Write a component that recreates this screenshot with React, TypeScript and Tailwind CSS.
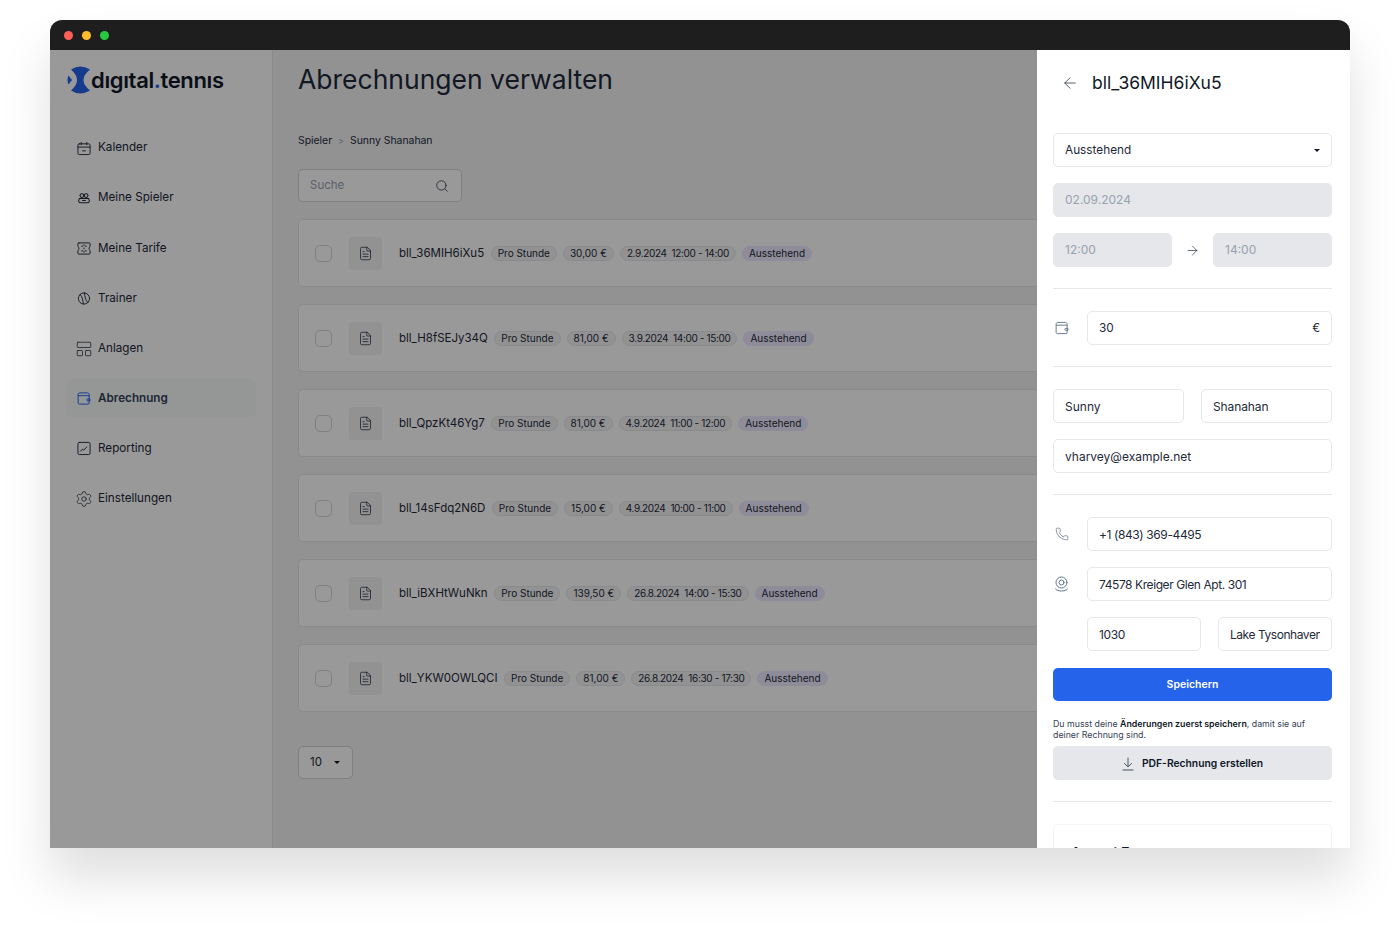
import { ArrowLeft, ArrowRight, FileText, LayoutPanelTop, Phone, Search, Settings } from "lucide-react";
import type { ReactNode } from "react";

const font = { fontFamily: "Inter, 'Noto Sans', sans-serif" };

const Calendar = () => (
  <svg width="15" height="15" viewBox="0 0 15 15" fill="none" stroke="currentColor" strokeWidth="1" strokeLinecap="round">
    <rect x="1" y="2.5" width="13" height="11.5" rx="1.5" />
    <path d="M1 6h13M4.5 1v2.5M10.5 1v2.5M6 10h3" />
  </svg>
);

const Users = () => (
  <svg width="15" height="15" viewBox="0 0 15 15" fill="none" stroke="currentColor" strokeWidth="1.1" strokeLinecap="round">
    <circle cx="5.2" cy="4.4" r="2" />
    <circle cx="9.8" cy="4.4" r="2" />
    <path d="M2.6 7.4h9.8l.8 2.4c.2 1.1-.5 2.2-1.7 2.2H3.5c-1.2 0-1.9-1.1-1.7-2.2zM6 9.6h3" />
  </svg>
);

const Ticket = () => (
  <svg width="15" height="15" viewBox="0 0 15 15" fill="none" stroke="currentColor" strokeWidth="1" strokeLinecap="round">
    <path d="M2 1.5h11c.6 0 1 .4 1 1V5.500c-1.500.5-1.500 3.500 0 4v3c0 .6-.4 1-1 1H2c-.6 0-1-.4-1-1v-3c1.500-.5 1.500-3.500 0-4v-3c0-.6.4-1 1-1z" />
    <path d="M7.500 3.500v1M7.500 7v1M7.500 10.500v1M5 5h1M9 5h1M5 10h1M9 10h1" />
  </svg>
);

const Ball = () => (
  <svg width="15" height="15" viewBox="0 0 15 15" fill="none" stroke="currentColor" strokeWidth="1" strokeLinecap="round">
    <circle cx="7.500" cy="7.500" r="6" />
    <path d="M3.300 3.200c2.700 2.300 2.900 6.200 3.500 10.200M8 1.600c.6 4 .8 7.900 3.700 10.100" />
  </svg>
);

const Wallet = ({ size = 15 }: { size?: number }) => (
  <svg width={size} height={size} viewBox="0 0 15 15" fill="none" stroke="currentColor" strokeWidth="1" strokeLinecap="round">
    <path d="M13 4.500V3.200c0-1-.6-1.700-1.600-1.700H3C1.900 1.500 1.200 2.300 1.200 3.400v8.800c0 .8.600 1.300 1.300 1.300h9.300c.7 0 1.200-.5 1.200-1.200V4.500H1.500" />
    <path d="M13.500 8h-2.200c-.5 0-.9.400-.9 1s.4 1 .9 1h2.200z" />
  </svg>
);

const Chart = () => (
  <svg width="15" height="15" viewBox="0 0 15 15" fill="none" stroke="currentColor" strokeWidth="1" strokeLinecap="round" strokeLinejoin="round">
    <rect x="1" y="1" width="13" height="13" rx="1.5" />
    <path d="M3.500 10.500l2.300-2.300 1.400 1.100 3.300-3.400" />
  </svg>
);

const Pin = () => (
  <svg width="15" height="16" viewBox="0 0 15 16" fill="none" stroke="currentColor" strokeWidth="1" strokeLinecap="round">
    <circle cx="7.500" cy="6.500" r="5.500" />
    <circle cx="7.500" cy="6.500" r="2.500" />
    <path d="M1.500 13c1 1.300 3.400 2 6 2s5-.7 6-2" />
  </svg>
);

const Download = () => (
  <svg width="12" height="14" viewBox="0 0 12 14" fill="none" stroke="currentColor" strokeWidth="1" strokeLinecap="round" strokeLinejoin="round">
    <path d="M6 1v8.500M2.500 6.500L6 9.800l3.500-3.300M1 13h10" />
  </svg>
);

const Caret = () => <span className="h-0 w-0 border-x-[3px] border-t-[3px] border-x-transparent border-t-gray-900" />;

const navItems: { label: string; icon: ReactNode; active?: boolean }[] = [
  { label: "Kalender", icon: <Calendar /> },
  { label: "Meine Spieler", icon: <Users /> },
  { label: "Meine Tarife", icon: <Ticket /> },
  { label: "Trainer", icon: <Ball /> },
  { label: "Anlagen", icon: <LayoutPanelTop size={18} strokeWidth={1} className="shrink-0" /> },
  { label: "Abrechnung", icon: <Wallet />, active: true },
  { label: "Reporting", icon: <Chart /> },
  { label: "Einstellungen", icon: <Settings size={18} strokeWidth={1} className="shrink-0" /> },
];

const bills = [
  { id: "bll_36MIH6iXu5", price: "30,00 €", date: "2.9.2024  12:00 - 14:00" },
  { id: "bll_H8fSEJy34Q", price: "81,00 €", date: "3.9.2024  14:00 - 15:00" },
  { id: "bll_QpzKt46Yg7", price: "81,00 €", date: "4.9.2024  11:00 - 12:00" },
  { id: "bll_14sFdq2N6D", price: "15,00 €", date: "4.9.2024  10:00 - 11:00" },
  { id: "bll_iBXHtWuNkn", price: "139,50 €", date: "26.8.2024  14:00 - 15:30" },
  { id: "bll_YKW0OWLQCI", price: "81,00 €", date: "26.8.2024  16:30 - 17:30" },
];

const Pill = ({ children, violet, className = "" }: { children: ReactNode; violet?: boolean; className?: string }) => (
  <span
    className={`flex h-[15px] items-center whitespace-pre rounded-full border px-[6px] text-[10px] ${
      violet ? "border-violet-100 bg-violet-100" : "border-gray-200 bg-gray-100"
    } ${className}`}
  >
    {children}
  </span>
);

const Field = ({ value, className = "", disabled }: { value: string; className?: string; disabled?: boolean }) => (
  <div
    className={`h-[34px] rounded-[5px] border px-[11px] text-[12px] ${
      disabled ? "border-gray-200 bg-gray-200 leading-[32px] text-gray-400" : "border-gray-200 bg-white leading-[34px] text-gray-800"
    } ${className}`}
  >
    <div className="overflow-hidden whitespace-nowrap">{value}</div>
  </div>
);

const Divider = () => <div className="mb-[22px] mt-[21px] h-px bg-gray-200" />;

export default function App() {
  return (
    <div className="h-[938px] overflow-hidden bg-white pl-[50px] pt-[20px]" style={font}>
      <div className="h-[828px] w-[1300px] overflow-hidden rounded-t-[12px] shadow-[0_30px_50px_rgba(0,0,0,0.13)]">
        <div className="flex h-[30px] items-center gap-[9px] bg-[#1e1e1e] pl-[14px]">
          <span className="h-[9px] w-[9px] rounded-full bg-[#ff5f57]" />
          <span className="h-[9px] w-[9px] rounded-full bg-[#febc2e]" />
          <span className="h-[9px] w-[9px] rounded-full bg-[#28c840]" />
        </div>

        <div className="relative flex h-[798px] w-[1299px]">
          <aside className="w-[223px] shrink-0 border-r border-gray-200 bg-white pl-[17px] pr-[16px]">
            <div className="flex h-[60px] items-center">
              <svg width="24" height="28" viewBox="0 0 24 28" className="shrink-0">
                <path d="M4 3.500Q13 -2.500 23 3.500Q10 14 23 24.500Q13 30.500 4 24.500Q16 14 4 3.500z" fill="#2563eb" />
                <path d="M1.500 9.500L5 14L1.500 18.500Q-0.500 14 1.500 9.500z" fill="#2563eb" />
              </svg>
              <span className="text-[22px] font-semibold tracking-[-0.350px] text-gray-900">
                dıgıtal<span className="text-[#2563eb]">.</span>tennıs
              </span>
            </div>
            <nav className="mt-[18px] flex flex-col gap-[12.150px]">
              {navItems.map((item) => (
                <div
                  key={item.label}
                  className={`flex h-[38px] items-center gap-[7px] rounded-[6px] pl-[10px] pt-[2px] text-[11.700px] ${
                    item.active ? "bg-gray-50 font-semibold text-slate-700" : "text-gray-800"
                  }`}
                >
                  <span className={`flex w-[14px] justify-center ${item.active ? "text-blue-600" : "text-gray-800"}`}>{item.icon}</span>
                  {item.label}
                </div>
              ))}
            </nav>
          </aside>

          <main className="min-w-0 flex-1 bg-gray-100 pl-[25px] pr-[25px]">
            <h1 className="mt-[11px] h-[36px] text-[26.500px] leading-[36px] text-gray-800">Abrechnungen verwalten</h1>
            <div className="mt-[36px] flex items-center gap-[6px] text-[10.400px] text-gray-800">
              <span>Spieler</span>
              <span className="text-[9px] text-gray-400">&gt;</span>
              <span>Sunny Shanahan</span>
            </div>
            <div className="mt-[20px] flex h-[33px] w-[164px] items-center justify-between rounded-[5px] border border-gray-300 bg-white pl-[11px] pr-[12px] pt-px text-[11.500px] text-gray-400">
              Suche
              <Search size={14} strokeWidth={1.300} className="text-gray-800" />
            </div>
            <div className="mt-[17px] flex flex-col gap-[17px]">
              {bills.map((bill) => (
                <div key={bill.id} className="flex h-[68px] items-center rounded-[5px] border border-gray-200 bg-white pl-[16px] pt-[2px]">
                  <span className="h-[17px] w-[17px] rounded-[5px] border border-gray-300" />
                  <span className="ml-[17px] flex h-[33px] w-[33px] items-center justify-center rounded-[3px] bg-gray-100">
                    <FileText size={15} strokeWidth={1.200} className="text-gray-800" />
                  </span>
                  <span className="ml-[17px] mr-[6.500px] pt-px text-[11.500px] text-gray-800">{bill.id}</span>
                  <div className="flex items-center gap-[6px] text-gray-800">
                    <Pill>Pro Stunde</Pill>
                    <Pill>{bill.price}</Pill>
                    <Pill className="tracking-[-0.350px]">{bill.date}</Pill>
                    <Pill violet>Ausstehend</Pill>
                  </div>
                </div>
              ))}
            </div>
            <div className="mt-[34px] flex h-[33px] w-[55px] items-center justify-between rounded-[5px] border border-gray-300 bg-white pl-[11px] pr-[12px] pt-[1px] text-[11.500px] text-gray-800">
              10
              <Caret />
            </div>
          </main>

          <div className="absolute inset-0 bg-black/40" />

          <div className="absolute right-0 top-0 h-full w-[312px] overflow-hidden bg-white pl-[16px] pr-[17px]">
            <div className="flex h-[66px] items-center gap-[13px] pl-[8px] text-gray-800">
              <ArrowLeft size={18} strokeWidth={1} />
              <span className="text-[17.500px] text-gray-900">bll_36MIH6iXu5</span>
            </div>
            <div className="mt-[17px] flex h-[34px] items-center justify-between rounded-[5px] border border-gray-200 pl-[11px] pr-[11px] pt-[1px] text-[11.800px] text-gray-800">
              Ausstehend
              <Caret />
            </div>
            <Field value="02.09.2024" disabled className="mt-[16px]" />
            <div className="mt-[16px] flex items-center justify-between">
              <Field value="12:00" disabled className="w-[119px]" />
              <ArrowRight size={15} strokeWidth={1.100} className="text-gray-800" />
              <Field value="14:00" disabled className="w-[119px]" />
            </div>
            <Divider />
            <div className="flex items-center justify-between">
              <span className="ml-[2px] text-slate-500"><Wallet size={14} /></span>
              <div className="flex h-[34px] w-[245px] items-center justify-between rounded-[5px] border border-gray-200 px-[11px] pt-[2px] text-[11.800px] text-gray-800">
                30
                <span>€</span>
              </div>
            </div>
            <Divider />
            <div className="flex justify-between">
              <Field value="Sunny" className="w-[131px]" />
              <Field value="Shanahan" className="w-[131px] tracking-[-0.100px]" />
            </div>
            <Field value="vharvey@example.net" className="mt-[16px]" />
            <Divider />
            <div className="flex items-center justify-between">
              <Phone size={14} strokeWidth={1} className="ml-[2px] text-slate-600" />
              <Field value="+1 (843) 369-4495" className="w-[245px] tracking-[-0.400px]" />
            </div>
            <div className="mt-[16px] flex items-center justify-between">
              <span className="ml-[1px] text-slate-500"><Pin /></span>
              <Field value="74578 Kreiger Glen Apt. 301" className="w-[245px] tracking-[-0.420px]" />
            </div>
            <div className="ml-[34px] mt-[16px] flex justify-between">
              <Field value="1030" className="w-[114px] tracking-[-0.400px]" />
              <Field value="Lake Tysonhaven" className="w-[114px] tracking-[-0.450px]" />
            </div>
            <button className="mt-[17px] h-[33px] w-full rounded-[5px] bg-[#2563eb] pt-px text-[10.500px] font-semibold text-white">Speichern</button>
            <p className="mt-[17px] text-[8.800px] leading-[11px] text-gray-700">
              Du musst deine <strong className="font-semibold text-gray-900">Änderungen zuerst speichern</strong>, damit sie auf deiner Rechnung sind.
            </p>
            <button className="mt-[6px] flex h-[34px] w-full items-center justify-center gap-[8px] rounded-[5px] bg-gray-200 pt-px text-[10.300px] font-semibold text-gray-900">
              <span className="text-gray-600"><Download /></span>
              PDF-Rechnung erstellen
            </button>
            <Divider />
            <div className="h-[80px] rounded-[5px] border border-gray-100 px-[17px] pt-[17px] text-[13.500px] font-semibold text-gray-900">August 7</div>
          </div>
        </div>
      </div>
    </div>
  );
}
